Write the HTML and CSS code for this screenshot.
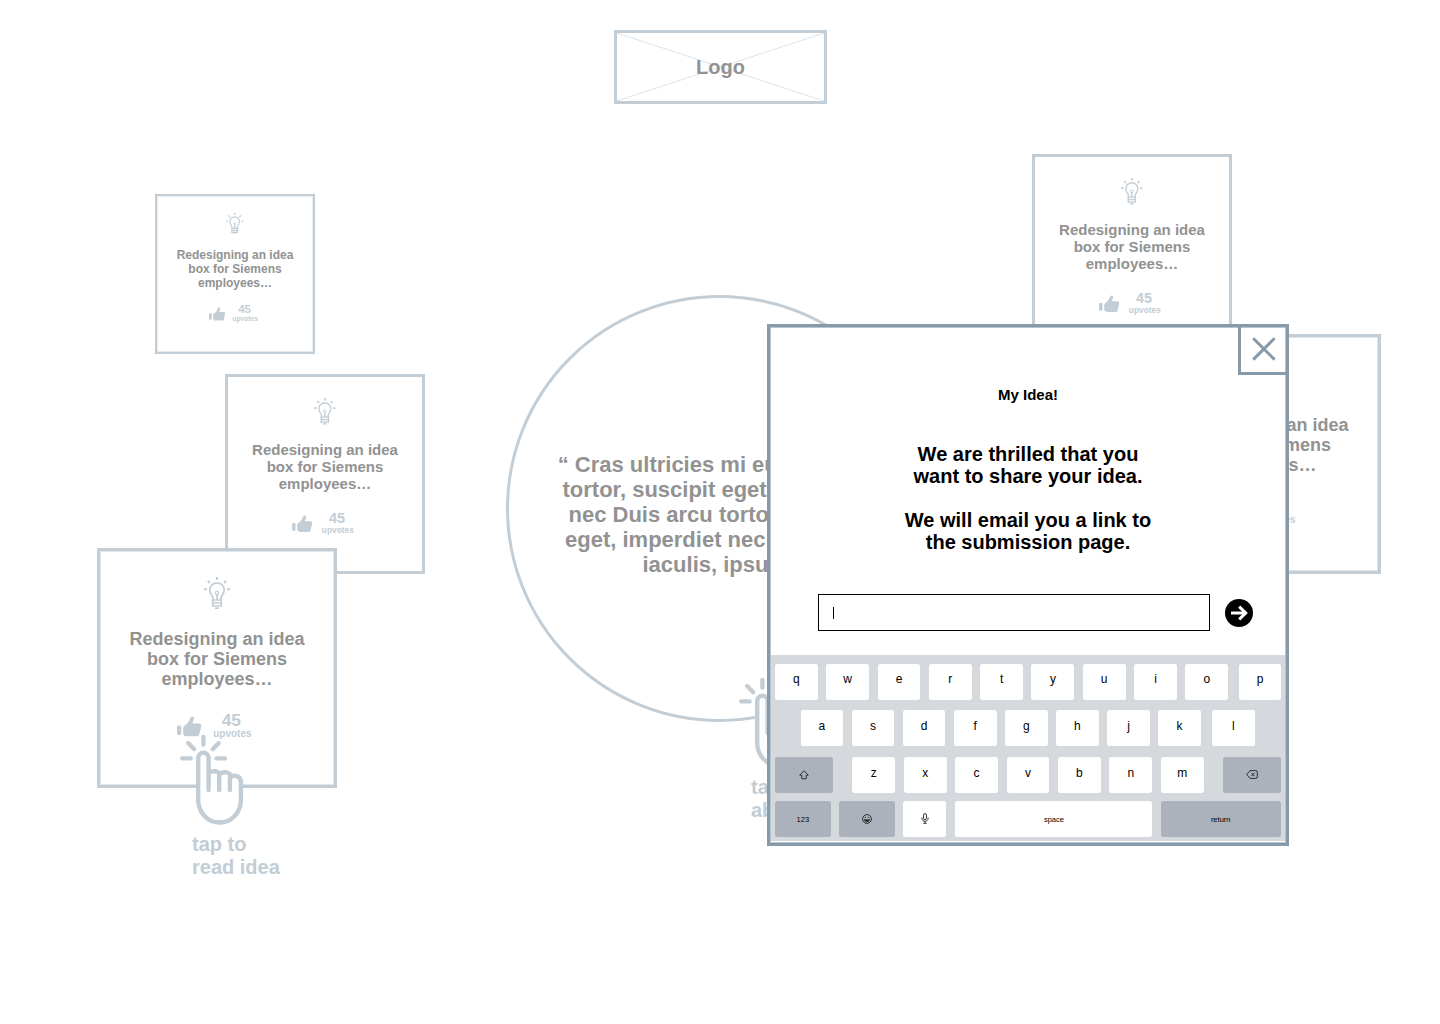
FILE: index.html
```html
<!DOCTYPE html>
<html lang="en">
<head>
<meta charset="utf-8">
<title>Idea wall</title>
<link rel="stylesheet" href="styles.css">
</head>
<body>
<svg class="defs" width="0" height="0">
  <symbol id="bulb" viewBox="0 0 26 32">
    <g fill="none" stroke="currentColor" stroke-width="1.700">
      <path d="M13 0v3M0 12.2h3M23 12.2h3M3.8 3.8l2.2 2.2M22.2 3.8L20 6" stroke-width="2"/>
      <path d="M9 23v-2.2c0-1.6-3.2-3.6-3.2-7.8a7.2 7.2 0 0 1 14.4 0c0 4.200-3.200 6.200-3.200 7.800V23"/>
      <path d="M8.700 23h8.600v6H8.700zM8.700 26h8.600M13 17.600V23"/>
      <circle cx="13" cy="16" r="1.600" stroke-width="1.200"/>
      <path d="M11 31.200h4"/>
    </g>
  </symbol>
  <symbol id="thumb" viewBox="0 0 25 21">
    <rect x="0" y="9.500" width="4.200" height="9.500" rx="1.400" fill="currentColor"/>
    <path fill="currentColor" d="M6.200 12c0-1.300.8-2 2.300-3l2.300-2 2.700-5.300C14.600-.4 17.400.4 17 2.600l-1.500 5H22c2 0 2.700 1.300 2.200 2.900l-2 8c-.4 1.300-1 1.800-2.400 1.800H10.500c-2 0-4.300-.8-4.300-2.800z"/>
  </symbol>
  <symbol id="tap" viewBox="0 0 64 92">
    <g fill="none" stroke="currentColor" stroke-width="4.300" stroke-linecap="round">
      <path d="M23.400 2.800v8M8.200 9l6 6.300M38.700 9l-6 6.300M2.200 24.400h8.500M36.500 24.400H45"/>
    </g>
    <path fill="#fff" stroke="currentColor" stroke-width="4.400" stroke-linecap="round" stroke-linejoin="round" d="M28.600 56V24a5.200 5.200 0 0 0-10.400 0v42a21.300 22.500 0 0 0 42.700 0V48c0-5.500-5-7.500-10-5.500-1-4.500-7-5.500-11-2.500-2-3.200-7-3.500-10.700-1.500"/>
    <path fill="none" stroke="currentColor" stroke-width="4.400" stroke-linecap="round" d="M39.200 56V41.500M49.900 56V44"/>
  </symbol>
</svg>

<main class="wall">
  <div class="logo">
    <svg class="logo-cross" viewBox="0 0 207 68" preserveAspectRatio="none"><path d="M0 0L207 68M207 0L0 68"/></svg>
    <span class="logo-text">Logo</span>
  </div>

  <article class="card card-s pos-a">
    <svg class="bulb"><use href="#bulb"/></svg>
    <h2 class="card-title">Redesigning an idea<br>box for Siemens<br>employees…</h2>
    <div class="votes"><svg class="thumb"><use href="#thumb"/></svg><div class="tally"><b class="count">45</b><span class="unit">upvotes</span></div></div>
  </article>
  <article class="card card-m pos-b">
    <svg class="bulb"><use href="#bulb"/></svg>
    <h2 class="card-title">Redesigning an idea<br>box for Siemens<br>employees…</h2>
    <div class="votes"><svg class="thumb"><use href="#thumb"/></svg><div class="tally"><b class="count">45</b><span class="unit">upvotes</span></div></div>
  </article>
  <article class="card card-l pos-c">
    <svg class="bulb"><use href="#bulb"/></svg>
    <h2 class="card-title">Redesigning an idea<br>box for Siemens<br>employees…</h2>
    <div class="votes"><svg class="thumb"><use href="#thumb"/></svg><div class="tally"><b class="count">45</b><span class="unit">upvotes</span></div></div>
  </article>
  <article class="card card-m pos-d">
    <svg class="bulb"><use href="#bulb"/></svg>
    <h2 class="card-title">Redesigning an idea<br>box for Siemens<br>employees…</h2>
    <div class="votes"><svg class="thumb"><use href="#thumb"/></svg><div class="tally"><b class="count">45</b><span class="unit">upvotes</span></div></div>
  </article>
  <article class="card card-l pos-e">
    <svg class="bulb"><use href="#bulb"/></svg>
    <h2 class="card-title">Redesigning an idea<br>box for Siemens<br>employees…</h2>
    <div class="votes"><svg class="thumb"><use href="#thumb"/></svg><div class="tally"><b class="count">45</b><span class="unit">upvotes</span></div></div>
  </article>

  <section class="quote">
    <span class="line line-1">“ Cras ultricies mi eu</span>
    <span class="line line-2">tortor, suscipit eget</span>
    <span class="line line-3">nec Duis arcu tortor</span>
    <span class="line line-4">eget, imperdiet nec</span>
    <span class="line line-5">iaculis, ipsum</span>
  </section>

  <div class="hint hint-read">
    <svg class="hand"><use href="#tap"/></svg>
    <p class="hint-text">tap to<br>read idea</p>
  </div>
  <div class="hint hint-about">
    <svg class="hand"><use href="#tap"/></svg>
    <p class="hint-text">tap<br>ab</p>
  </div>

  <section class="modal">
    <button class="close" aria-label="Close"><svg width="24" height="24" viewBox="0 0 24 24"><path d="M1.200 1.200l21.400 21.400M22.600 1.200L1.200 22.600"/></svg></button>
    <h1 class="modal-title">My Idea!</h1>
    <p class="message">We are thrilled that you<br>want to share your idea.</p>
    <p class="message">We will email you a link to<br>the submission page.</p>
    <div class="form">
      <div class="field"><span class="caret"></span></div>
      <svg class="send" width="28" height="28" viewBox="0 0 28 28"><circle cx="14" cy="14" r="14"/><path d="M6 14h14.500M14.200 7.700l6.500 6.300-6.500 6.300"/></svg>
    </div>
    <div class="keyboard">
      <div class="row row-1"><span class="key">q</span><span class="key">w</span><span class="key">e</span><span class="key">r</span><span class="key">t</span><span class="key">y</span><span class="key">u</span><span class="key">i</span><span class="key">o</span><span class="key last">p</span></div>
      <div class="row row-2"><span class="key">a</span><span class="key">s</span><span class="key">d</span><span class="key">f</span><span class="key">g</span><span class="key">h</span><span class="key">j</span><span class="key">k</span><span class="key last">l</span></div>
      <div class="row row-3">
        <span class="key dark wide"><svg width="10" height="10" viewBox="0 0 10 10"><path d="M5 .8L9.300 5.200H7.200v3.600H2.800V5.200H.7z"/></svg></span>
        <div class="letters"><span class="key">z</span><span class="key">x</span><span class="key">c</span><span class="key">v</span><span class="key">b</span><span class="key">n</span><span class="key">m</span></div>
        <span class="key dark wide"><svg width="12" height="9" viewBox="0 0 12 9"><path d="M4 .6h5.800q1.500 0 1.500 1.500v4.800q0 1.500-1.500 1.500H4L.7 4.500zM5.300 2.800l3.200 3.400M8.500 2.800L5.300 6.200"/></svg></span>
      </div>
      <div class="row row-4">
        <span class="key dark mid small">123</span>
        <span class="key dark mid"><svg width="10" height="10" viewBox="0 0 10 10"><circle cx="5" cy="5" r="4.400"/><path d="M2.700 3.700q.7-.8 1.400 0M5.900 3.700q.7-.8 1.400 0"/><path class="solid" d="M1.900 5.300h6.200C8 7.200 6.500 8.300 5 8.300S2 7.200 1.900 5.300z"/></svg></span>
        <span class="key"><svg width="8" height="11" viewBox="0 0 8 11"><rect x="2.500" y=".6" width="3" height="6" rx="1.500"/><path d="M.9 4.500v1C.9 9.200 7.100 9.200 7.100 5.500v-1M4 8.300v2M2.300 10.300h3.400"/></svg></span>
        <span class="key small space">space</span>
        <span class="key dark small return">return</span>
      </div>
    </div>
  </section>
</main>
</body>
</html>
```
FILE: styles.css
```css
* { box-sizing: border-box; }

body {
  margin: 0;
  background: #fff;
  font-family: "Liberation Sans", Arial, Helvetica, sans-serif;
}

svg { display: block; }
.defs { position: absolute; }

.wall {
  position: relative;
  width: 1440px;
  height: 1024px;
  overflow: hidden;
  color: #929292;
}

/* Logo placeholder */
.logo {
  position: relative;
  display: flex;
  align-items: center;
  justify-content: center;
  width: 213px;
  height: 74px;
  margin: 0 auto;
  top: 30px;
  left: .5px;
  border: 3px solid #c2cdd6;
}
.logo-cross {
  position: absolute;
  inset: 0;
  width: 100%;
  height: 100%;
  fill: none;
  stroke: #dde3e7;
  stroke-width: 1;
}
.logo-text { position: relative; font-size: 20px; font-weight: bold; }

.card {
  position: absolute;
  display: flex;
  flex-direction: column;
  align-items: center;
  width: 13.3333em;
  height: 13.3333em;
  padding-top: 1.4em;
  border: .2em solid #c2cdd6;
  background: #fff;
}
.card-s { font-size: 12px; border-width: 2px; padding-top: 17px; box-shadow: inset 0 0 0 1px #e8ecef; }
.card-m { font-size: 15px; }
.card-l { font-size: 18px; border-width: 3px; padding-top: 26px; box-shadow: inset 0 0 0 1px #dfe5e9; }
.pos-a { left: 155px; top: 194px; }
.pos-b { left: 225px; top: 374px; }
.pos-c { left: 97px; top: 548px; }
.pos-d { left: 1032px; top: 154px; }
.pos-e { left: 1141px; top: 334px; }

.bulb { width: 1.4444em; height: 1.7778em; color: #c2cdd6; flex: none; }
.card-title {
  margin: 1.15em 0 0;
  font-size: 1em;
  line-height: normal;
  text-align: center;
  white-space: nowrap;
}
.card-l .card-title { line-height: 20px; margin-top: 19.500px; }
.card-m .card-title { line-height: 17px; margin-top: 16.200px; }
.card-s .card-title { line-height: 14px; }
.votes {
  display: flex;
  align-items: flex-start;
  gap: .6em;
  margin-top: 1.24em;
  margin-right: .28em;
  color: #c2cdd6;
}
.card-s .votes { margin-top: 13.600px; }
.thumb { width: 1.3889em; height: 1.1667em; margin-top: .28em; }
.tally { display: flex; flex-direction: column; align-items: center; }
.count { font-size: .96em; line-height: 1; margin: .05em .12em 0 0; }
.unit { font-size: .5556em; font-weight: bold; line-height: 1; }

/* Quote */
.quote {
  position: absolute;
  left: 506px;
  top: 295px;
  width: 427px;
  height: 427px;
  padding-top: 154px;
  border: 3px solid #c2cdd6;
  border-radius: 50%;
  font-size: 22px;
  font-weight: bold;
  line-height: 25px;
  white-space: nowrap;
}
.line { display: block; }
.line-1 { padding-left: 48.700px; }
.line-2 { padding-left: 53.500px; }
.line-3 { padding-left: 59.500px; }
.line-4 { padding-left: 56px; }
.line-5 { padding-left: 133.500px; }

/* Tap hints */
.hint { position: absolute; color: #c2cdd6; }
.hint-read { left: 180px; top: 734px; }
.hint-about { left: 739px; top: 677px; }
.hand { width: 64px; height: 92px; }
.hint-text {
  margin: 7px 0 0 12px;
  font-size: 20px;
  font-weight: bold;
  line-height: 23px;
}

/* Modal */
.modal {
  position: absolute;
  left: 767px;
  top: 324px;
  width: 522px;
  height: 522px;
  padding-top: 59px;
  border: 3px solid #869aaa;
  box-shadow: inset 0 0 0 1px #b9c5ce;
  background: #fff;
  color: #000;
  text-align: center;
}
.close {
  position: absolute;
  right: -3px;
  top: -3px;
  display: flex;
  align-items: center;
  justify-content: center;
  width: 51px;
  height: 51px;
  padding: 0 0 1px 0;
  border: 3px solid #869aaa;
  background: none;
}
.close path { stroke: #869aaa; stroke-width: 3; fill: none; }
.modal-title { margin: 0 0 39px; font-size: 15px; line-height: 18px; }
.message {
  margin: 0 0 22px;
  font-size: 20px;
  font-weight: bold;
  line-height: 22px;
}
.form {
  display: flex;
  align-items: center;
  gap: 15px;
  margin: 41px 0 0 48px;
}
.field {
  display: flex;
  align-items: center;
  width: 392px;
  height: 37px;
  padding-left: 14px;
  border: 1px solid #000;
}
.caret { width: 1.300px; height: 12px; background: #000; }
.send path { fill: none; stroke: #fff; stroke-width: 3; }

/* Keyboard */
.keyboard {
  display: flex;
  flex-direction: column;
  height: 186px;
  margin: 24px 1px 0;
  padding: 8.500px 4px 0;
  background: #d5d8dd;
  font-size: 12px;
}
.row { display: flex; }
.row-1 { gap: 8.500px; }
.row-2 { gap: 8.300px; margin-top: 10.500px; padding-left: 25.500px; }
.row-3 { justify-content: space-between; margin-top: 10.500px; }
.row-4 { gap: 8.500px; margin-top: 8.500px; }
.letters { display: flex; gap: 8.600px; }
.key {
  display: flex;
  align-items: center;
  justify-content: center;
  flex: none;
  width: 42.800px;
  height: 36px;
  padding-bottom: 5px;
  border-radius: 2.500px;
  background: #fff;
}
.row-1 .last { margin-left: 2px; }
.row-2 .last { margin-left: 2.800px; }
.letters .key { padding-bottom: 4px; }
.dark { background: #acb2bc; }
.wide { width: 57.500px; padding: 0; }
.mid { width: 55.700px; padding: 0; }
.small { font-size: 7.500px; padding: 1px 0 0; }
.row-4 .key svg { margin-top: -1px; }
.row-4 .key { padding-bottom: 0; }
.row-4 .space { width: 197.500px; padding-left: 1px; }
.return { width: 120px; }
.key svg { fill: none; stroke: #222; stroke-width: .9; }
.key .solid { fill: #333; stroke: none; }
```
